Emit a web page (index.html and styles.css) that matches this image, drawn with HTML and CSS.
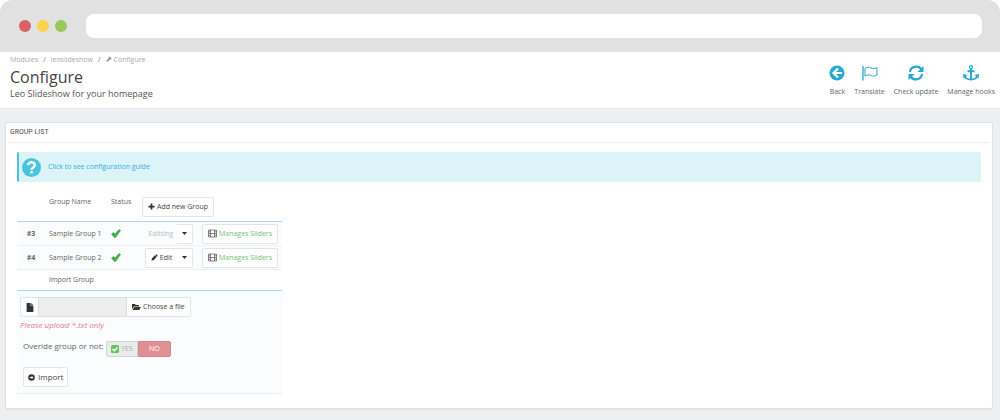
FILE: index.html
```html
<!DOCTYPE html>
<html lang="en">

<head>
    <meta charset="UTF-8">
    <meta name="viewport" content="width=device-width, initial-scale=1">
    <title>Configure - Leo Slideshow</title>
    <link rel="stylesheet" href="styles.css">
</head>

<body>
    <svg class="sprite" aria-hidden="true">
        <symbol id="film" viewBox="0 0 18 18">
            <path d="M1 2h16v14H1zM5 2v14M13 2v14M5 9h8M1 5.500h4M1 9h4M1 12.500h4M13 5.500h4M13 9h4M13 12.500h4" fill="none" stroke="currentColor" stroke-width="1.600"/>
        </symbol>
        <symbol id="tick" viewBox="0 0 20 18">
            <path d="M1 10l4-3 3 3 8-9 3 2L9 17H7z" fill="#45ae45" stroke="#2f9137"/>
        </symbol>
        <symbol id="caret" viewBox="0 0 10 6">
            <path d="M0 0h10L5 6z"/>
        </symbol>
    </svg>

    <div class="browser-bar">
        <span class="dot red"></span>
        <span class="dot yellow"></span>
        <span class="dot green"></span>
        <input class="address" type="text" aria-label="Address">
    </div>

    <header class="page-head">
        <div class="page-title">
            <nav class="breadcrumb">
                <a href="#">Modules</a><i>/</i><a href="#">leoslideshow</a><i>/</i><a href="#"><svg class="icon-wrench" viewBox="0 0 16 16"><path d="M1 12.500L7 7c-1-3 1-6 5-6l-2 3 2 2 3-2c0 4-3 6-6 5l-5.500 6z"/></svg>Configure</a>
            </nav>
            <h1>Configure</h1>
            <h4>Leo Slideshow for your homepage</h4>
        </div>
        <div class="toolbar">
            <a href="#">
                <svg viewBox="0 0 16 16"><circle cx="8" cy="8" r="7.500"/><path d="M9 3.500L4.500 8 9 12.500M5 8h8" fill="none" stroke="#fff" stroke-width="2.200"/></svg>
                Back
            </a>
            <a href="#">
                <svg viewBox="0 0 16 16"><path d="M1 1v14.500" fill="none" stroke="currentColor" stroke-width="1.300"/><path d="M3 3.500c3-2 4-1.500 6-.5s3 1 6-.5v7.500c-3 1.500-4 1.500-6 .5s-3-1-6 .5z" fill="none" stroke="currentColor"/></svg>
                Translate
            </a>
            <a href="#">
                <svg viewBox="0 0 16 16"><path d="M2 7c.5-6 8.500-7 11.500-2.500M14 9c-.5 6-8.500 7-11.500 2.500" fill="none" stroke="currentColor" stroke-width="2.300"/><path d="M15.500 1v6h-6zM.5 15V9h6z"/></svg>
                Check update
            </a>
            <a href="#">
                <svg viewBox="0 0 16 16"><g fill="none" stroke="currentColor"><circle cx="8" cy="2.200" r="1.500" stroke-width="1.300"/><path d="M8 4v10M4.500 6.300h7" stroke-width="2"/><path d="M1.500 11c1 2.500 3.500 3.500 6.500 3.500s5.500-1 6.500-3.500" stroke-width="2"/></g><path d="M0 9l4.500 1L.5 13.500zM16 9l-4.500 1 4 3.500z"/></svg>
                Manage hooks
            </a>
        </div>
    </header>

    <main class="panel">
        <h3 class="panel-heading">GROUP LIST</h3>
        <div class="panel-body">
            <div class="alert">
                <svg viewBox="0 0 20 20"><circle cx="10" cy="10" r="10" fill="#48c5de"/><path d="M6.500 7.500C6.500 3.500 13.500 3.500 13.500 7.500c0 2.500-3.500 2.300-3.500 5" fill="none" stroke="#fff" stroke-width="2.600"/><path d="M8.700 13.700h2.600v2.500H8.700z" fill="#fff"/></svg>
                <a href="#">Click to see configuration guide</a>
            </div>

            <table class="groups">
                <colgroup>
                    <col class="col-id">
                    <col class="col-name">
                    <col class="col-status">
                    <col class="col-edit">
                    <col class="col-sliders">
                </colgroup>
                <thead>
                    <tr>
                        <th></th>
                        <th>Group Name</th>
                        <th>Status</th>
                        <th colspan="2" class="add">
                            <button class="btn" type="button"><svg viewBox="0 0 16 16"><path d="M6 1h4v5h5v4h-5v5H6v-5H1V6h5z"/></svg>Add new Group</button>
                        </th>
                    </tr>
                </thead>
                <tbody>
                    <tr>
                        <td class="id">#3</td>
                        <td>Sample Group 1</td>
                        <td><svg class="status" role="img" aria-label="Enabled"><use href="#tick"/></svg></td>
                        <td class="actions">
                            <div class="btn-group">
                                <button class="btn editing" type="button" disabled>Editting</button>
                                <button class="btn toggle" type="button" aria-label="More"><svg><use href="#caret"/></svg></button>
                            </div>
                        </td>
                        <td><button class="btn sliders" type="button"><svg><use href="#film"/></svg>Manages Sliders</button></td>
                    </tr>
                    <tr>
                        <td class="id">#4</td>
                        <td>Sample Group 2</td>
                        <td><svg class="status" role="img" aria-label="Enabled"><use href="#tick"/></svg></td>
                        <td class="actions">
                            <div class="btn-group">
                                <button class="btn edit" type="button"><svg viewBox="0 0 16 16"><path d="M1 15l1-5 7-7 4 4-7 7zM10 2l2-1.500L15.500 4 14 6z"/></svg>Edit</button>
                                <button class="btn toggle" type="button" aria-label="More"><svg><use href="#caret"/></svg></button>
                            </div>
                        </td>
                        <td><button class="btn sliders" type="button"><svg><use href="#film"/></svg>Manages Sliders</button></td>
                    </tr>
                    <tr class="import-head">
                        <th></th>
                        <th colspan="4">Import Group</th>
                    </tr>
                </tbody>
            </table>

            <form class="import">
                <div class="file-row">
                    <label class="addon" for="filename" aria-label="File"><svg viewBox="0 0 14 16"><path d="M1 0h7v5h5v11H1zM9 0l4 4H9z"/></svg></label>
                    <input id="filename" type="text" readonly>
                    <button class="btn choose" type="button"><svg viewBox="0 0 18 16"><path d="M0 12V2h6l1.500 2H14v3H4zM4.500 8H18l-3.500 6H1z"/></svg>Choose a file</button>
                </div>
                <p class="help">Please upload *.txt only</p>
                <fieldset class="override">
                    <legend>Overide group or not:</legend>
                    <div class="switch">
                        <input type="radio" name="override" id="override_on">
                        <label for="override_on"><svg viewBox="0 0 16 16"><rect width="16" height="16" rx="3" fill="#62c462"/><path d="M3 8l3.500 3.500L13 5" fill="none" stroke="#fff" stroke-width="2.500"/></svg>YES</label>
                        <input type="radio" name="override" id="override_off" checked>
                        <label for="override_off">NO</label>
                    </div>
                </fieldset>
                <button class="btn submit" type="button"><svg viewBox="0 0 16 16"><circle cx="8" cy="8" r="7.500"/><path d="M8 4v3H4v2h4v3l4.500-4z" fill="#fff"/></svg>Import</button>
            </form>
        </div>
    </main>
</body>

</html>
```
FILE: styles.css
```css
:root {
    --background-color: #eeeff1;
    --text-color: #666;
    --primary-color: #27a9d2;
    --link-color: #35aee6;
    --border-color: #e3e6e8;
    --line-color: #a6dcec;
    --row-color: #fafcfe;
}

* {
    box-sizing: border-box;
}

html {
    background-color: #fff;
}

body {
    font-family: "Open Sans", sans-serif;
    font-size: 7px;
    line-height: 12px;
    margin: 0;
    min-height: 100vh;
    color: var(--text-color);
    background-color: var(--background-color);
    border-radius: 12px 12px 0 0;
}

a {
    color: inherit;
    text-decoration: none;
}

svg {
    fill: currentColor;
}

.sprite {
    display: none;
}

/* browser bar */
.browser-bar {
    display: flex;
    align-items: center;
    gap: 6px;
    height: 52px;
    padding: 0 18px 0 19px;
    background-color: #e1e1e1;
    border-radius: 12px 12px 0 0;
}

.dot {
    width: 12px;
    height: 12px;
    border-radius: 50%;
}

.red {
    background-color: #d96163;
}

.yellow {
    background-color: #fcd24a;
}

.green {
    background-color: #9bc75b;
}

.address {
    flex: 1;
    height: 24px;
    margin-left: 13px;
    padding: 0 10px;
    border: 0;
    border-radius: 8px;
    background-color: #fff;
}

/* page header */
.page-head {
    display: flex;
    justify-content: space-between;
    padding: 2px 5px 8px 10px;
    background-color: #fff;
    border-bottom: 1px solid #e6e8ea;
}

.breadcrumb {
    display: flex;
    color: #aaa;
}

.breadcrumb i {
    margin: 0 5px;
    font-style: normal;
    color: #777;
}

.icon-wrench {
    width: 6px;
    height: 6px;
    margin-right: 2px;
    color: #777;
}

.page-title h1 {
    margin: 0;
    font-size: 16px;
    line-height: 22px;
    font-weight: 400;
    color: #444;
}

.page-title h4 {
    margin: 0;
    font-size: 9px;
    line-height: 12px;
    font-weight: 400;
    color: #555;
}

.toolbar {
    display: flex;
    gap: 9px;
    padding-top: 11px;
}

.toolbar a {
    display: flex;
    flex-direction: column;
    align-items: center;
    gap: 5px;
}

.toolbar svg {
    width: 16px;
    height: 16px;
    color: var(--primary-color);
}

/* panel */
.panel {
    margin: 13px 7px 0 5px;
    padding-bottom: 14px;
    background-color: #fff;
    border: 1px solid #dfe3e5;
    border-radius: 2px;
    box-shadow: 0 1px 1px rgba(0, 0, 0, 0.06);
}

.panel-heading {
    margin: 0 2px;
    padding: 3px 2px 4px;
    font-family: "Roboto Condensed", Roboto, sans-serif;
    font-size: 8px;
    line-height: 12px;
    font-weight: 400;
    color: #555;
    border-bottom: 1px solid #eee;
}

.panel-body {
    padding: 9px 11px 0;
}

.alert {
    display: flex;
    align-items: center;
    gap: 7px;
    height: 30px;
    padding-left: 3px;
    color: var(--link-color);
    background-color: #dcf3f8;
    border-left: 2px solid #48c5de;
    border-radius: 2px;
}

.alert svg {
    width: 19px;
    height: 19px;
}

/* buttons */
.btn {
    display: inline-flex;
    align-items: center;
    justify-content: center;
    gap: 2px;
    height: 20px;
    padding: 0 5px;
    font-family: inherit;
    font-size: 7px;
    line-height: 12px;
    color: #444;
    background-color: #fff;
    border: 1px solid var(--border-color);
    border-radius: 2px;
    white-space: nowrap;
}

.btn svg {
    flex: none;
    width: 7px;
    height: 7px;
    color: #333;
}

.btn-group {
    display: inline-flex;
    vertical-align: middle;
}

.btn-group .edit {
    width: 32px;
    border-right: 0;
    border-radius: 2px 0 0 2px;
}

.btn-group .editing {
    width: 32px;
    color: #bbb;
    background-color: transparent;
    border-color: transparent;
}

.btn-group .toggle {
    width: 16px;
    border-left: 0;
    border-radius: 0 2px 2px 0;
}

.btn.toggle svg {
    width: 5px;
    height: 3px;
}

.btn.sliders {
    width: 76px;
    color: #72c279;
}

.btn.sliders svg {
    width: 9px;
    height: 9px;
    color: #666;
}

/* group table */
.groups {
    width: 265px;
    margin-top: 8px;
    table-layout: fixed;
    border-collapse: separate;
    border-spacing: 0;
}

.col-id {
    width: 28px;
}

.col-name {
    width: 62px;
}

.col-status {
    width: 31px;
}

.col-edit {
    width: 60px;
}

.groups th,
.groups td {
    height: 24px;
    padding: 0 4px;
    font-weight: 400;
    text-align: left;
    vertical-align: middle;
    white-space: nowrap;
}

.groups thead th {
    height: 32px;
    padding-bottom: 7px;
    border-bottom: 1px solid var(--line-color);
}

.groups thead .add {
    padding: 4px 4px 2px;
}

.groups td {
    background-color: var(--row-color);
    border-bottom: 1px solid #eaf0f3;
}

.groups .btn {
    vertical-align: middle;
}

.groups .id {
    font-weight: 700;
    text-align: center;
}

.groups .actions {
    padding-right: 5px;
    text-align: right;
}

.groups .import-head th {
    height: 21px;
    border-bottom: 1px solid var(--line-color);
}

.status {
    display: block;
    width: 10px;
    height: 9px;
}

/* import form */
.import {
    width: 265px;
    padding: 6px 3px;
    background-color: var(--row-color);
    border-bottom: 1px solid #eaf0f3;
}

.file-row {
    display: flex;
}

.addon {
    display: flex;
    align-items: center;
    justify-content: center;
    width: 18px;
    height: 20px;
    color: #333;
    border: 1px solid var(--border-color);
    border-right: 0;
    border-radius: 2px 0 0 2px;
}

.addon svg {
    width: 8px;
    height: 9px;
}

.file-row input {
    width: 89px;
    height: 20px;
    padding: 0 4px;
    font: inherit;
    background-color: #eee;
    border: 1px solid #dcdfe1;
    border-radius: 0;
}

.file-row .choose {
    border-left: 0;
    border-radius: 0 2px 2px 0;
}

.btn.choose svg {
    width: 9px;
    height: 8px;
}

.help {
    margin: 2px 0 0;
    font-size: 8px;
    font-style: italic;
    color: #df8088;
}

.override {
    display: flex;
    gap: 2px;
    margin: 10px 0 0;
    padding: 0 3px;
    border: 0;
}

.override legend {
    float: left;
    padding: 0;
    font-size: 8px;
    line-height: 9px;
}

.switch {
    display: flex;
    width: 65px;
    height: 16px;
}

.switch input {
    position: absolute;
    opacity: 0;
}

.switch label {
    display: flex;
    flex: 1;
    align-items: center;
    justify-content: center;
    gap: 2px;
    color: #aaa;
    background-color: #ebebeb;
    border: 1px solid #d5d5d5;
    border-radius: 2px 0 0 2px;
}

.switch label svg {
    width: 8px;
    height: 8px;
}

.switch #override_off:checked + label {
    color: #fff;
    background-color: #e08f95;
    border-color: #d9858b;
    border-radius: 0 2px 2px 0;
}

.btn.submit {
    margin: 10px 3px 0;
    padding: 0 4px;
    gap: 3px;
    font-size: 8px;
}
```
